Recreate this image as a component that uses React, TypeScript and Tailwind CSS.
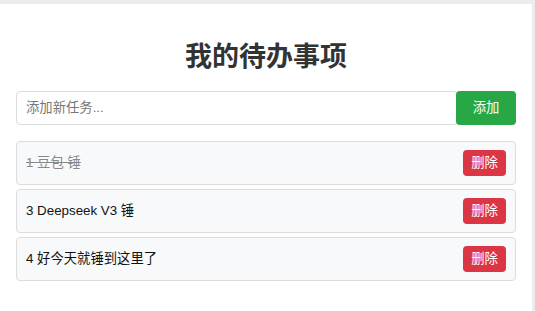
import { useState } from "react";

type Todo = { id: number; text: string; done: boolean };

const initial: Todo[] = [
  { id: 1, text: "1 豆包 锤", done: true },
  { id: 3, text: "3 Deepseek V3 锤", done: false },
  { id: 4, text: "4 好今天就锤到这里了", done: false },
];

export default function App() {
  const [todos, setTodos] = useState(initial);
  const [input, setInput] = useState("");

  function addTodo() {
    if (!input.trim()) return;
    setTodos([...todos, { id: Date.now(), text: input.trim(), done: false }]);
    setInput("");
  }

  return (
    <div
      className="h-[311px] bg-[#ececec] pt-[4px] pr-[3px]"
      style={{ fontFamily: '"Liberation Sans", "Noto Sans CJK SC", sans-serif' }}
    >
      <div className="h-full bg-white px-4 pt-[38px]">
        <h1 className="text-center text-[27px] leading-[31px] font-bold text-[#333]">
          我的待办事项
        </h1>
        <div className="mt-[18px] flex h-[34px]">
          <input
            value={input}
            onChange={(e) => setInput(e.target.value)}
            placeholder="添加新任务..."
            className="flex-1 min-w-0 rounded-[4px] border border-[#dcdcdc] px-[9px] text-[13.33px] text-[#333] placeholder:text-[#777] outline-none"
          />
          <button
            onClick={addTodo}
            className="w-[60px] -ml-[2px] rounded-[4px] bg-[#28a745] text-[13.33px] text-white"
          >
            添加
          </button>
        </div>
        <ul className="mt-[16px] flex flex-col gap-[4px]">
          {todos.map((t) => (
            <li
              key={t.id}
              className="flex h-[44px] items-center justify-between rounded-[4px] border border-[#dcdcdc] bg-[#f8f9fa] px-[9px]"
            >
              <span
                onClick={() =>
                  setTodos(todos.map((x) => (x.id === t.id ? { ...x, done: !x.done } : x)))
                }
                className={
                  t.done
                    ? "text-[13.33px] text-[#888] line-through"
                    : "text-[13.33px] text-[#111]"
                }
              >
                {t.text}
              </span>
              <button
                onClick={() => setTodos(todos.filter((x) => x.id !== t.id))}
                className="h-[26px] w-[43px] rounded-[4px] bg-[#dc3545] text-[13.33px] text-white"
              >
                删除
              </button>
            </li>
          ))}
        </ul>
      </div>
    </div>
  );
}
